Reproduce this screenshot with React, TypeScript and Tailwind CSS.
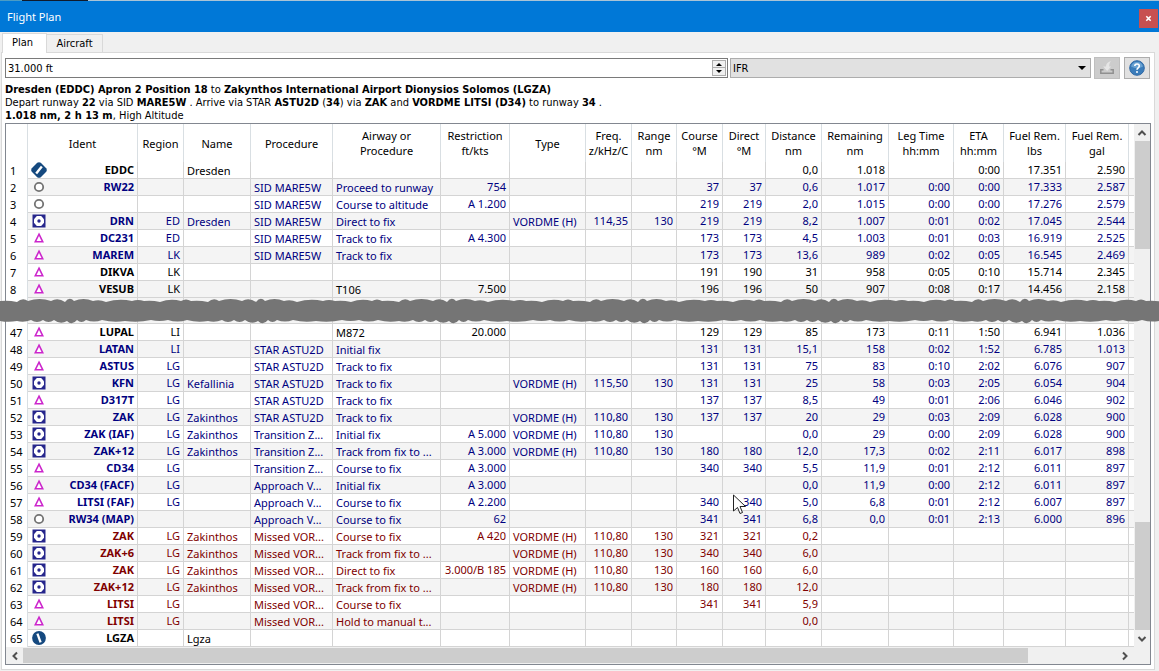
import React from "react";

type Tone = "black" | "navy" | "red";
type IconKind = "airport" | "ring" | "vor" | "fix" | "destination";

// num, icon, tone, then ident … fuel gal
type Row = [number, IconKind, Tone, ...string[]];

const ROWS_TOP: Row[] = [
  [1, "airport", "black", "EDDC", "", "Dresden", "", "", "", "", "", "", "", "", "0,0", "1.018", "", "0:00", "17.351", "2.590"],
  [2, "ring", "navy", "RW22", "", "", "SID MARE5W", "Proceed to runway", "754", "", "", "", "37", "37", "0,6", "1.017", "0:00", "0:00", "17.333", "2.587"],
  [3, "ring", "navy", "", "", "", "SID MARE5W", "Course to altitude", "A 1.200", "", "", "", "219", "219", "2,0", "1.015", "0:00", "0:00", "17.276", "2.579"],
  [4, "vor", "navy", "DRN", "ED", "Dresden", "SID MARE5W", "Direct to fix", "", "VORDME (H)", "114,35", "130", "219", "219", "8,2", "1.007", "0:01", "0:02", "17.045", "2.544"],
  [5, "fix", "navy", "DC231", "ED", "", "SID MARE5W", "Track to fix", "A 4.300", "", "", "", "173", "173", "4,5", "1.003", "0:01", "0:03", "16.919", "2.525"],
  [6, "fix", "navy", "MAREM", "LK", "", "SID MARE5W", "Track to fix", "", "", "", "", "173", "173", "13,6", "989", "0:02", "0:05", "16.545", "2.469"],
  [7, "fix", "black", "DIKVA", "LK", "", "", "", "", "", "", "", "191", "190", "31", "958", "0:05", "0:10", "15.714", "2.345"],
  [8, "fix", "black", "VESUB", "LK", "", "", "T106", "7.500", "", "", "", "196", "196", "50", "907", "0:08", "0:17", "14.456", "2.158"],
];

const ROWS_BOTTOM: Row[] = [
  [47, "fix", "black", "LUPAL", "LI", "", "", "M872", "20.000", "", "", "", "129", "129", "85", "173", "0:11", "1:50", "6.941", "1.036"],
  [48, "fix", "navy", "LATAN", "LI", "", "STAR ASTU2D", "Initial fix", "", "", "", "", "131", "131", "15,1", "158", "0:02", "1:52", "6.785", "1.013"],
  [49, "fix", "navy", "ASTUS", "LG", "", "STAR ASTU2D", "Track to fix", "", "", "", "", "131", "131", "75", "83", "0:10", "2:02", "6.076", "907"],
  [50, "vor", "navy", "KFN", "LG", "Kefallinia", "STAR ASTU2D", "Track to fix", "", "VORDME (H)", "115,50", "130", "131", "131", "25", "58", "0:03", "2:05", "6.054", "904"],
  [51, "fix", "navy", "D317T", "LG", "", "STAR ASTU2D", "Track to fix", "", "", "", "", "137", "137", "8,5", "49", "0:01", "2:06", "6.046", "902"],
  [52, "vor", "navy", "ZAK", "LG", "Zakinthos", "STAR ASTU2D", "Track to fix", "", "VORDME (H)", "110,80", "130", "137", "137", "20", "29", "0:03", "2:09", "6.028", "900"],
  [53, "vor", "navy", "ZAK (IAF)", "LG", "Zakinthos", "Transition Z...", "Initial fix", "A 5.000", "VORDME (H)", "110,80", "130", "", "", "0,0", "29", "0:00", "2:09", "6.028", "900"],
  [54, "vor", "navy", "ZAK+12", "LG", "Zakinthos", "Transition Z...", "Track from fix to ...", "A 3.000", "VORDME (H)", "110,80", "130", "180", "180", "12,0", "17,3", "0:02", "2:11", "6.017", "898"],
  [55, "fix", "navy", "CD34", "LG", "", "Transition Z...", "Course to fix", "A 3.000", "", "", "", "340", "340", "5,5", "11,9", "0:01", "2:12", "6.011", "897"],
  [56, "fix", "navy", "CD34 (FACF)", "LG", "", "Approach V...", "Initial fix", "A 3.000", "", "", "", "", "", "0,0", "11,9", "0:00", "2:12", "6.011", "897"],
  [57, "fix", "navy", "LITSI (FAF)", "LG", "", "Approach V...", "Course to fix", "A 2.200", "", "", "", "340", "340", "5,0", "6,8", "0:01", "2:12", "6.007", "897"],
  [58, "ring", "navy", "RW34 (MAP)", "", "", "Approach V...", "Course to fix", "62", "", "", "", "341", "341", "6,8", "0,0", "0:01", "2:13", "6.000", "896"],
  [59, "vor", "red", "ZAK", "LG", "Zakinthos", "Missed VOR...", "Course to fix", "A 420", "VORDME (H)", "110,80", "130", "321", "321", "0,2", "", "", "", "", ""],
  [60, "vor", "red", "ZAK+6", "LG", "Zakinthos", "Missed VOR...", "Track from fix to ...", "", "VORDME (H)", "110,80", "130", "340", "340", "6,0", "", "", "", "", ""],
  [61, "vor", "red", "ZAK", "LG", "Zakinthos", "Missed VOR...", "Direct to fix", "3.000/B 185", "VORDME (H)", "110,80", "130", "160", "160", "6,0", "", "", "", "", ""],
  [62, "vor", "red", "ZAK+12", "LG", "Zakinthos", "Missed VOR...", "Track from fix to ...", "", "VORDME (H)", "110,80", "130", "180", "180", "12,0", "", "", "", "", ""],
  [63, "fix", "red", "LITSI", "LG", "", "Missed VOR...", "Course to fix", "", "", "", "", "341", "341", "5,9", "", "", "", "", ""],
  [64, "fix", "red", "LITSI", "LG", "", "Missed VOR...", "Hold to manual t...", "", "", "", "", "", "", "0,0", "", "", "", "", ""],
  [65, "destination", "black", "LGZA", "", "Lgza", "", "", "", "", "", "", "", "", "", "", "", "", "", ""],
];

const COLUMNS: { lines: string[]; width: string; left?: boolean }[] = [
  { lines: ["Ident"], width: "w-[110px]" },
  { lines: ["Region"], width: "w-[46px]" },
  { lines: ["Name"], width: "w-[67px]", left: true },
  { lines: ["Procedure"], width: "w-[82px]", left: true },
  { lines: ["Airway or", "Procedure"], width: "w-[108px]", left: true },
  { lines: ["Restriction", "ft/kts"], width: "w-[69px]" },
  { lines: ["Type"], width: "w-[76px]", left: true },
  { lines: ["Freq.", "z/kHz/C"], width: "w-[46px]" },
  { lines: ["Range", "nm"], width: "w-[45px]" },
  { lines: ["Course", "°M"], width: "w-[46px]" },
  { lines: ["Direct", "°M"], width: "w-[43px]" },
  { lines: ["Distance", "nm"], width: "w-[56px]" },
  { lines: ["Remaining", "nm"], width: "w-[67px]" },
  { lines: ["Leg Time", "hh:mm"], width: "w-[65px]" },
  { lines: ["ETA", "hh:mm"], width: "w-[50px]" },
  { lines: ["Fuel Rem.", "lbs"], width: "w-[62px]" },
  { lines: ["Fuel Rem.", "gal"], width: "w-[63px]" },
];

const TONES: Record<Tone, string> = {
  black: "text-black",
  navy: "text-[#000080]",
  red: "text-[#800000]",
};

function WaypointIcon({ kind }: { kind: IconKind }) {
  return (
    <svg viewBox="0 0 16 16" className="h-4 w-4 shrink-0" aria-hidden="true">
      {kind === "airport" && (
        <>
          <path d="M6.2 .8Q8 -.4 9.800 .8L15.200 6.200Q16.400 8 15.200 9.800L9.800 15.200Q8 16.400 6.200 15.200L.8 9.800Q-.4 8 .8 6.200Z" fill="#15497f" />
          <path d="M5.200 11.400 10.800 4.600" stroke="#fff" strokeWidth="2.4" />
        </>
      )}
      {kind === "destination" && (
        <>
          <circle cx="8" cy="8" r="6.9" fill="#15497f" />
          <path d="M6.4 3.6 9.6 12.4" stroke="#fff" strokeWidth="2.3" />
        </>
      )}
      {kind === "ring" && <circle cx="8" cy="8" r="4.2" fill="#fff" stroke="#737373" strokeWidth="1.8" />}
      {kind === "vor" && (
        <>
          <rect x="1.5" y="1.5" width="13" height="13" fill="#26268c" />
          <path d="M5.800 3H10.200L13 6.200V9.800L10.200 13H5.800L3 9.800V6.200Z" fill="#fff" />
          <circle cx="8" cy="8" r="1.700" fill="#26268c" />
        </>
      )}
      {kind === "fix" && <path d="M8 4.200 11.700 11.700H4.300Z" fill="#fff" stroke="#cc26cc" strokeWidth="1.600" />}
    </svg>
  );
}

function PlanRow({ row }: { row: Row }) {
  const [num, icon, tone, ...cells] = row;
  return (
    <tr className={`h-[17px] ${TONES[tone]} ${num % 2 === 0 ? "bg-[#f4f4f4]" : "bg-white"}`}>
      <th scope="row" className="border-r border-[#d9dfe3] bg-white p-0 pl-1 text-left font-normal text-black">
        {num}
      </th>
      {cells.map((text, i) =>
        i === 0 ? (
          <td key={i} className="border-r border-b border-[#d4d4d4] p-0">
            <div className="flex h-4 items-center justify-between pr-[3px] pl-[3px] font-bold">
              <WaypointIcon kind={icon} />
              <span>{text}</span>
            </div>
          </td>
        ) : (
          <td
            key={i}
            className={`overflow-hidden border-r border-b border-[#d4d4d4] px-[3px] pb-0 whitespace-nowrap ${
              COLUMNS[i].left ? "pt-[2px] text-left leading-[14px]" : "pt-0 text-right"
            }`}
          >
            {text}
          </td>
        ),
      )}
      <td className="border-b border-[#d4d4d4] p-0" />
    </tr>
  );
}

function GapRow() {
  return (
    <tr className="h-[26px] bg-[#f4f4f4]" aria-hidden="true">
      <td className="border-r border-[#d9dfe3] bg-white p-0" />
      {COLUMNS.map((_, i) => (
        <td key={i} className="border-r border-b border-[#d4d4d4] p-0" />
      ))}
      <td className="border-b border-[#d4d4d4] p-0" />
    </tr>
  );
}

// Scalloped edges, like a series of overlapping brush dabs.
function tearPath(): string {
  const widths = [17, 11, 23, 14, 9, 19, 13, 26, 12, 16, 21, 10];
  const lifts = [2, 4, 3, 5, 2, 4, 3, 3, 5, 2, 4, 3];
  let d = "M0 3";
  let x = 0;
  let i = 0;
  while (x < 1159) {
    const w = widths[i % 12];
    const y = 3 + (i % 3 === 0 ? 1 : 0);
    d += `Q${x + w / 2} ${y - lifts[(i * 5) % 12]} ${x + w} ${y}`;
    x += w;
    i += 1;
  }
  d += `L${x} 22`;
  while (x > 0) {
    const w = widths[(i * 7 + 3) % 12];
    const y = 22 + (i % 4 === 0 ? 1 : 0);
    d += `Q${x - w / 2} ${y + lifts[(i * 7) % 12]} ${x - w} ${y}`;
    x -= w;
    i += 1;
  }
  return `${d}Z`;
}

function Chevron({ className }: { className: string }) {
  return (
    <svg viewBox="0 0 10 10" className={`h-[10px] w-[10px] ${className}`} aria-hidden="true">
      <path d="M1.5 7 5 3.5 8.5 7" fill="none" stroke="#505050" strokeWidth="2" />
    </svg>
  );
}

export default function App() {
  return (
    <main className="relative flex min-h-screen flex-col bg-[#f0f0f0] font-['DejaVu_Sans_Condensed','DejaVu_Sans',sans-serif] text-[11px] leading-[13px] text-black">
      <div className="flex h-px bg-[#a9c4d6]">
        <div className="w-[22px] bg-[#4b9cc4]" />
        <div className="w-[66px] bg-[#101a2b]" />
      </div>
      <header className="flex h-[31px] items-center justify-between bg-[#0078d7] pr-px pl-[7px]">
        <h1 className="font-['Noto_Sans',sans-serif] text-[11px] text-white">Flight Plan</h1>
        <button
          type="button"
          aria-label="Close"
          className="mt-1 flex h-[19px] w-[19px] items-center justify-center bg-[#c75050]"
        >
          <svg viewBox="0 0 8 8" className="h-[7px] w-[7px]" aria-hidden="true">
            <path d="M1.5 1.5 6.5 6.5M6.5 1.5 1.5 6.5" stroke="#fff" strokeWidth="1.8" />
          </svg>
        </button>
      </header>

      <nav className="flex h-5 items-end pl-[2px]" role="tablist">
        <button type="button" role="tab" aria-selected="true" className="z-10 -mb-px h-5 w-[45px] border-x border-t border-[#d9d9d9] bg-white pr-1 pb-[2px]">
          Plan
        </button>
        <button type="button" role="tab" aria-selected="false" className="h-[18px] w-14 border-t border-r border-[#d9d9d9] bg-[#f0f0f0]">
          Aircraft
        </button>
      </nav>

      <section className="mr-1 mb-px ml-px flex grow flex-col border border-[#d9d9d9] bg-white pt-1 pr-[3px] pb-1 pl-[3px]">
        <div className="flex items-center pr-px">
          <div className="flex h-5 w-[723px] shrink grow-[2] border border-[#7a7a7a] bg-white">
            <input
              aria-label="Cruise altitude"
              defaultValue="31.000 ft"
              className="min-w-0 grow bg-transparent pt-px pl-[2px] outline-none"
            />
            <div className="m-px flex w-[14px] flex-col">
              <button type="button" aria-label="Increase" className="flex h-2 items-center justify-center border border-[#adadad] bg-[#f0f0f0]">
                <svg viewBox="0 0 6 3" className="h-[3px] w-[6px]" aria-hidden="true"><path d="M0 3 3 0 6 3Z" /></svg>
              </button>
              <button type="button" aria-label="Decrease" className="flex h-2 items-center justify-center border border-t-0 border-[#adadad] bg-[#f0f0f0]">
                <svg viewBox="0 0 6 3" className="h-[3px] w-[6px]" aria-hidden="true"><path d="M0 0 3 3 6 0Z" /></svg>
              </button>
            </div>
          </div>
          <div className="relative ml-[2px] w-[361px] shrink grow">
            <select
              aria-label="Flight rules"
              defaultValue="IFR"
              className="block h-5 w-full appearance-none border border-[#adadad] bg-[#e1e1e1] pt-px pl-[2px]"
            >
              <option>IFR</option>
              <option>VFR</option>
            </select>
            <svg viewBox="0 0 8 4" className="pointer-events-none absolute top-2 right-[5px] h-1 w-2" aria-hidden="true"><path d="M0 0 4 4 8 0Z" /></svg>
          </div>
          <button type="button" aria-label="Set altitude" className="ml-[3px] flex h-[22px] w-[26px] shrink-0 items-center justify-center border border-[#bfbfbf] bg-[#cccccc]">
            <svg viewBox="0 0 16 16" className="h-4 w-4" aria-hidden="true">
              <path d="M4.500 9.800H1.800V13.200H14.200V9.800H11.500" fill="none" stroke="#909090" strokeWidth="1.500" />
              <path d="M4.200 6.500H7C7 4.200 8.500 2 12 1 10.400 3 10.200 4.500 10.200 6.500H12L8.200 11Z" fill="#e6e6e6" />
            </svg>
          </button>
          <button type="button" aria-label="Help" className="ml-1 flex h-[22px] w-[26px] shrink-0 items-center justify-center border border-[#adadad] bg-[#e1e1e1]">
            <svg viewBox="0 0 16 16" className="h-4 w-4" aria-hidden="true">
              <circle cx="8" cy="8" r="7.300" fill="#3a7cba" stroke="#2f68a5" />
              <path d="M2 6.500A6.300 6.300 0 0 1 14 6.500Q8 10 2 6.500Z" fill="#6aa2d2" />
              <path d="M5.800 6.100C5.800 3.300 10.300 3.300 10.300 6.100 10.300 7.800 8 7.800 8 9.700" fill="none" stroke="#fff" strokeWidth="1.600" />
              <circle cx="8" cy="12" r="1" fill="#fff" />
            </svg>
          </button>
        </div>

        <div className="mt-1 h-10">
          <p className="whitespace-nowrap">
            <b>Dresden (EDDC) Apron 2 Position 18</b> to <b>Zakynthos International Airport Dionysios Solomos (LGZA)</b>
          </p>
          <p className="whitespace-nowrap">
            Depart runway <b>22</b> via SID <b>MARE5W</b> . Arrive via STAR <b>ASTU2D</b> (<b>34</b>) via <b>ZAK</b> and{" "}
            <b>VORDME LITSI (D34)</b> to runway <b>34</b> .
          </p>
          <p className="whitespace-nowrap">
            <b>1.018 nm, 2 h 13 m</b>, High Altitude
          </p>
        </div>

        <div className="border border-[#828790]">
          <div className="flex">
            <div className="min-w-0 grow">
              <table className="w-full table-fixed border-separate border-spacing-0 font-['Noto_Sans',sans-serif] text-[11px] leading-4">
                <colgroup>
                  <col className="w-[22px]" />
                  {COLUMNS.map((c, i) => (
                    <col key={i} className={c.width} />
                  ))}
                  <col />
                </colgroup>
                <thead>
                  <tr className="h-[38px] leading-[15px]">
                    <td className="border-r border-[#d9dfe3] p-0" />
                    {COLUMNS.map((c, i) => (
                      <th key={i} scope="col" className="border-r border-[#d9dfe3] p-0 font-normal whitespace-nowrap">
                        {c.lines.map((l, j) => (
                          <span key={j} className="block text-center">
                            {l}
                          </span>
                        ))}
                      </th>
                    ))}
                    <td className="p-0" />
                  </tr>
                </thead>
                <tbody>
                  {ROWS_TOP.map((r) => (
                    <PlanRow key={r[0]} row={r} />
                  ))}
                  <GapRow />
                  {ROWS_BOTTOM.map((r) => (
                    <PlanRow key={r[0]} row={r} />
                  ))}
                </tbody>
              </table>
            </div>
            <div className="flex w-4 shrink-0 flex-col items-center bg-[#f0f0f0]">
              <Chevron className="mt-1 mb-[3px]" />
              <div className="h-[108px] w-[15px] bg-[#cdcdcd]" />
              <div className="grow" />
              <div className="h-[108px] w-[15px] bg-[#cdcdcd]" />
              <Chevron className="mt-1 mb-[3px] rotate-180" />
            </div>
          </div>
          <div className="flex h-[17px] items-center bg-[#f0f0f0]">
            <Chevron className="mr-[3px] ml-1 -rotate-90" />
            <div className="h-[15px] w-[1005px] bg-[#cdcdcd]" />
            <div className="grow" />
            <Chevron className="mr-5 rotate-90" />
          </div>
        </div>
      </section>

      <svg viewBox="0 0 1159 26" preserveAspectRatio="none" className="absolute top-[298px] left-0 h-[26px] w-full" aria-hidden="true">
        <path d={tearPath()} fill="#757575" />
      </svg>
      <svg viewBox="0 0 14 21" className="pointer-events-none absolute top-[494px] left-[733px] h-[21px] w-[14px]" aria-hidden="true">
        <path d="M.5 1V17L4.500 13.500 7 19.500 9.500 18.500 7 12.500H12.500Z" fill="#fff" stroke="#222" strokeWidth="1" />
      </svg>
    </main>
  );
}
